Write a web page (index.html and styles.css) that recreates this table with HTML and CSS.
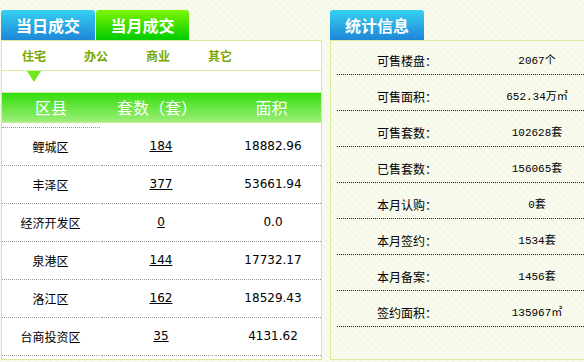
FILE: index.html
```html
<!DOCTYPE html>
<html lang="zh-CN">
<head>
<meta charset="utf-8">
<title>成交统计</title>
<link rel="stylesheet" href="styles.css">
</head>
<body>
<div class="page">
  <section class="deals">
    <div class="tabs">
      <div class="tab tab-blue">当日成交</div>
      <div class="tab tab-green">当月成交</div>
    </div>
    <div class="panel">
      <div class="subtabs">
        <span class="subtab">住宅</span>
        <span class="subtab">办公</span>
        <span class="subtab">商业</span>
        <span class="subtab">其它</span>
      </div>
      <div class="pointer-row"><span class="pointer"></span></div>
      <div class="thead">
        <span>区县</span>
        <span>套数（套）</span>
        <span>面积</span>
      </div>
      <div class="lead-line"></div>
      <div class="tbody">
        <div class="row"><span class="c1">鲤城区</span><span class="c2"><a>184</a></span><span class="c3">18882.96</span></div>
        <div class="row"><span class="c1">丰泽区</span><span class="c2"><a>377</a></span><span class="c3">53661.94</span></div>
        <div class="row"><span class="c1">经济开发区</span><span class="c2"><a>0</a></span><span class="c3">0.0</span></div>
        <div class="row"><span class="c1">泉港区</span><span class="c2"><a>144</a></span><span class="c3">17732.17</span></div>
        <div class="row"><span class="c1">洛江区</span><span class="c2"><a>162</a></span><span class="c3">18529.43</span></div>
        <div class="row"><span class="c1">台商投资区</span><span class="c2"><a>35</a></span><span class="c3">4131.62</span></div>
      </div>
    </div>
  </section>
  <section class="stats">
    <div class="tabs">
      <div class="tab tab-blue">统计信息</div>
    </div>
    <div class="stat-panel">
      <ul class="stat-list">
        <li><span class="label">可售楼盘：</span><span class="value">2067个</span></li>
        <li><span class="label">可售面积：</span><span class="value">652.34万㎡</span></li>
        <li><span class="label">可售套数：</span><span class="value">102628套</span></li>
        <li><span class="label">已售套数：</span><span class="value">156065套</span></li>
        <li><span class="label">本月认购：</span><span class="value">0套</span></li>
        <li><span class="label">本月签约：</span><span class="value">1534套</span></li>
        <li><span class="label">本月备案：</span><span class="value">1456套</span></li>
        <li><span class="label">签约面积：</span><span class="value">135967㎡</span></li>
      </ul>
    </div>
  </section>
</div>
</body>
</html>
```
FILE: styles.css
```css
html, body {
  margin: 0;
  padding: 0;
  overflow: hidden;
}
body {
  width: 584px;
  height: 362px;
  background-color: #f7f9ea;
  background-image: repeating-linear-gradient(45deg, #f5f8e6 0 2px, #f9fbef 2px 5px);
  font-family: "Noto Sans CJK SC", "DejaVu Sans", sans-serif;
  font-size: 12px;
  color: #000;
}
.page {
  display: flex;
  gap: 8px;
  padding: 10px 0 0 1px;
}
.deals {
  width: 321px;
  flex: none;
}
.stats {
  flex: 1;
}
.tabs {
  display: flex;
  gap: 1px;
  height: 30px;
}
.tab {
  width: 94px;
  height: 30px;
  line-height: 30px;
  text-align: center;
  color: #fff;
  font-size: 16px;
  font-weight: bold;
  border-radius: 3px 3px 0 0;
}
.tab-blue {
  background: linear-gradient(#35d0f0, #1e86d8);
}
.tab-green {
  width: 93px;
  background: linear-gradient(#7ef500, #00cc00);
}
.panel {
  border: 1px solid #d3eb9b;
  background: #fff;
  height: 318px;
}
.subtabs {
  display: flex;
  height: 29px;
  align-items: center;
  padding-left: 20px;
  border-bottom: 1px solid #d3eb9b;
}
.subtab {
  width: 62px;
  color: #7aa800;
  font-weight: bold;
  font-size: 12px;
}
.pointer-row {
  height: 21px;
  border-bottom: 1px solid #d3eb9b;
}
.pointer {
  display: block;
  width: 0;
  height: 0;
  margin-left: 25px;
  border-left: 7px solid transparent;
  border-right: 7px solid transparent;
  border-top: 11px solid #70e81c;
}
.thead {
  display: grid;
  grid-template-columns: 98px 114px 1fr;
  height: 29px;
  line-height: 29px;
  text-align: center;
  color: #fff;
  font-size: 16px;
  background: linear-gradient(#33dd0c, #9cef78);
  border-bottom: 1px solid #d3eb9b;
}
.thead span:last-child {
  padding-left: 8px;
}
.lead-line {
  width: 98px;
  margin-top: 4px;
  border-bottom: 1px dotted #999;
}
.row {
  display: grid;
  grid-template-columns: 97px 112px 1fr;
  column-gap: 2px;
  height: 38px;
}
.row span {
  height: 37px;
  line-height: 37px;
  border-bottom: 1px dotted #999;
  text-align: center;
}
.c2, .c3 {
  font-family: "DejaVu Sans", sans-serif;
  font-size: 12px;
}
.c2 {
  padding-left: 8px;
}
.c2 a {
  text-decoration: underline;
  color: #000;
}
.c3 {
  padding-left: 10px;
}
.stat-panel {
  border-left: 1px solid #d3eb9b;
  border-top: 1px solid #d3eb9b;
  border-bottom: 1px solid #d3eb9b;
  height: 318px;
}
.stat-list {
  list-style: none;
  margin: 0 0 0 6px;
  padding: 0;
}
.stat-list li {
  display: flex;
  height: 14px;
  line-height: 14px;
  padding: 15px 0 6px;
  border-bottom: 1px dotted #222;
}
.stat-list li:first-child {
  padding-top: 13px;
}
.label {
  width: 113px;
  padding-left: 40px;
  font-size: 12px;
}
.value {
  width: 94px;
  text-align: center;
  font-family: "Liberation Mono", "Noto Sans CJK SC", monospace;
  font-size: 11px;
}
```
